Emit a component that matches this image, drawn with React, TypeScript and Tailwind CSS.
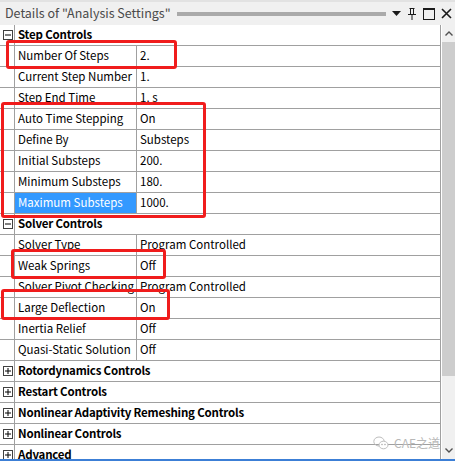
import React from 'react';

type Row =
  | { kind: 'group'; label: string; open: boolean }
  | { kind: 'prop'; label: string; value: string; selected?: boolean };

const rows: Row[] = [
  { kind: 'group', label: 'Step Controls', open: true },
  { kind: 'prop', label: 'Number Of Steps', value: '2.' },
  { kind: 'prop', label: 'Current Step Number', value: '1.' },
  { kind: 'prop', label: 'Step End Time', value: '1. s' },
  { kind: 'prop', label: 'Auto Time Stepping', value: 'On' },
  { kind: 'prop', label: 'Define By', value: 'Substeps' },
  { kind: 'prop', label: 'Initial Substeps', value: '200.' },
  { kind: 'prop', label: 'Minimum Substeps', value: '180.' },
  { kind: 'prop', label: 'Maximum Substeps', value: '1000.', selected: true },
  { kind: 'group', label: 'Solver Controls', open: true },
  { kind: 'prop', label: 'Solver Type', value: 'Program Controlled' },
  { kind: 'prop', label: 'Weak Springs', value: 'Off' },
  { kind: 'prop', label: 'Solver Pivot Checking', value: 'Program Controlled' },
  { kind: 'prop', label: 'Large Deflection', value: 'On' },
  { kind: 'prop', label: 'Inertia Relief', value: 'Off' },
  { kind: 'prop', label: 'Quasi-Static Solution', value: 'Off' },
  { kind: 'group', label: 'Rotordynamics Controls', open: false },
  { kind: 'group', label: 'Restart Controls', open: false },
  { kind: 'group', label: 'Nonlinear Adaptivity Remeshing Controls', open: false },
  { kind: 'group', label: 'Nonlinear Controls', open: false },
  { kind: 'group', label: 'Advanced', open: false },
];

const ExpandBox = ({ open }: { open: boolean }) => (
  <svg width="10" height="10" viewBox="0 0 10 10" className="block">
    <rect x="0.5" y="0.5" width="9" height="9" fill="#fff" stroke="#404040" />
    <line x1="2" y1="5" x2="8" y2="5" stroke="#000" />
    {!open && <line x1="5" y1="2" x2="5" y2="8" stroke="#000" />}
  </svg>
);

const App: React.FC = () => {
  return (
    <div
      className="relative w-[455px] h-[461px] overflow-hidden bg-white text-[11.5px] leading-none text-black"
      style={{ fontFamily: '"Noto Sans CJK SC", "Noto Sans", sans-serif' }}
    >
      {/* title bar */}
      <div className="h-[25px] flex items-center bg-[#f0f0f0] border-t-[2px] border-[#e2e2e2] pl-[5px] pr-[3px]">
        <span className="text-[12.5px] text-[#4a4a4a] whitespace-nowrap">Details of "Analysis Settings"</span>
        <div className="flex-1 mx-[6px] h-[4px] bg-[radial-gradient(#a8a8a8_0.7px,transparent_0.9px)] bg-[length:2px_2px]" />
        <div className="flex items-center gap-[6px]">
          <svg width="9" height="6" viewBox="0 0 9 6"><path d="M0 0h9L4.5 5z" fill="#1a1a1a" /></svg>
          <svg width="10" height="12" viewBox="0 0 10 12" fill="none" stroke="#1a1a1a">
            <path d="M2.5 0.5h5M3.5 0.5v6M6.5 0.5v6M1 6.5h8M5 6.5v5.5" />
          </svg>
          <svg width="12" height="12" viewBox="0 0 12 12" fill="none" stroke="#1a1a1a">
            <rect x="0.5" y="0.5" width="11" height="11" />
            <line x1="0.5" y1="1.5" x2="11.5" y2="1.5" />
          </svg>
          <svg width="11" height="11" viewBox="0 0 11 11" fill="none" stroke="#1a1a1a" strokeWidth="1.6">
            <path d="M1 1l9 9M10 1l-9 9" />
          </svg>
        </div>
      </div>

      <div className="flex">
        {/* grid */}
        <div className="w-[442px] border-r border-[#a0a0a0]">
          {rows.map((r, i) => (
            <div key={i} className="flex h-[21px] border-b border-[#a0a0a0]">
              <div className="w-[15px] shrink-0 border-r border-[#a0a0a0] flex items-center pl-[3px] bg-white">
                {r.kind === 'group' && <ExpandBox open={r.open} />}
              </div>
              {r.kind === 'group' ? (
                <div className="flex-1 flex items-center pl-[3px] pb-[1px] font-bold tracking-[-0.2px] whitespace-nowrap">{r.label}</div>
              ) : (
                <>
                  <div
                    className={`w-[122px] shrink-0 border-r border-[#a0a0a0] flex items-center pl-[3px] pb-[1px] whitespace-nowrap overflow-hidden ${
                      r.selected ? 'bg-[#3399ff] text-white' : ''
                    }`}
                  >
                    {r.label}
                  </div>
                  <div className="flex-1 flex items-center pl-[3px] pb-[1px] whitespace-nowrap">{r.value}</div>
                </>
              )}
            </div>
          ))}
        </div>

        {/* scrollbar */}
        <div className="w-[13px] ml-[1px] bg-[#f0f0f0] flex flex-col items-center h-[434px]">
          <div className="h-[17px] flex items-center justify-center">
            <svg width="8" height="5" viewBox="0 0 8 5" fill="none" stroke="#505050" strokeWidth="1.4">
              <path d="M0.5 4.5L4 1l3.5 3.5" />
            </svg>
          </div>
          <div className="w-full h-[334px] bg-[#cdcdcd]" />
          <div className="flex-1" />
          <div className="h-[17px] flex items-center justify-center">
            <svg width="8" height="5" viewBox="0 0 8 5" fill="none" stroke="#505050" strokeWidth="1.4">
              <path d="M0.5 0.5L4 4l3.5-3.5" />
            </svg>
          </div>
        </div>
      </div>

      {/* bottom edge */}
      <div className="absolute left-0 right-0 bottom-0 h-[2px] bg-[#3c7fd6]" />

      {/* watermark */}
      <div className="absolute left-[373px] top-[436px] flex items-center gap-[5px] text-[12px] text-[#b8b8b8]">
        <svg width="16" height="14" viewBox="0 0 16 14" fill="none" stroke="#bdbdbd" strokeWidth="1">
          <ellipse cx="6" cy="5.5" rx="5.2" ry="4.5" />
          <ellipse cx="10.5" cy="9" rx="4.5" ry="3.8" fill="#fff" />
          <circle cx="9" cy="8.5" r="0.5" fill="#bdbdbd" />
          <circle cx="12" cy="8.5" r="0.5" fill="#bdbdbd" />
        </svg>
        <span>CAE之道</span>
      </div>

      {/* annotation boxes */}
      <div className="absolute left-[6px] top-[40px] w-[171px] h-[29px] border-[3px] border-[#f01c1c] rounded-[3px]" />
      <div className="absolute left-[1px] top-[102px] w-[205px] h-[116px] border-[3px] border-[#f01c1c] rounded-[3px]" />
      <div className="absolute left-[11px] top-[249px] w-[155px] h-[30px] border-[3px] border-[#f01c1c] rounded-[3px]" />
      <div className="absolute left-[1px] top-[289px] w-[169px] h-[31px] border-[3px] border-[#f01c1c] rounded-[3px]" />
    </div>
  );
};

export default App;
